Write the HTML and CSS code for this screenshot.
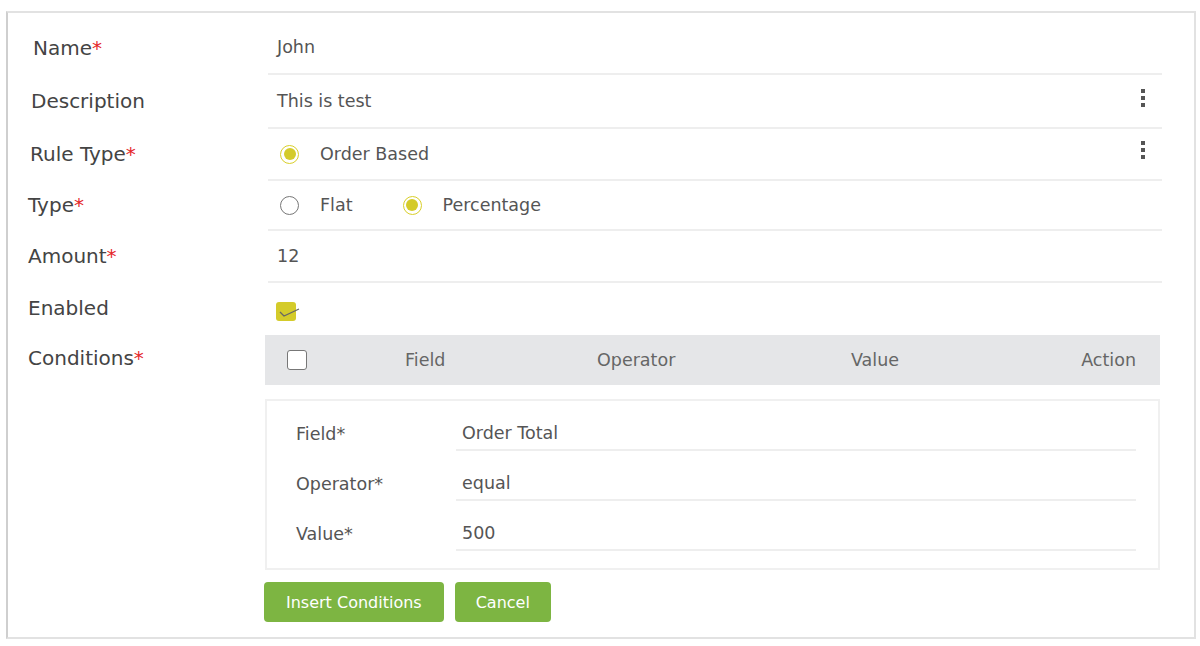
FILE: index.html
```html
<!DOCTYPE html>
<html lang="en">
<head>
    <meta charset="UTF-8">
    <title>Discount Rule</title>
    <link rel="stylesheet" href="styles.css">
</head>
<body>
    <div class="panel">
        <div class="row r1">
            <div class="label l-name">Name<span class="req">*</span></div>
            <div class="field">John</div>
        </div>
        <div class="row r2">
            <div class="label l-desc">Description</div>
            <div class="field">This is test<span class="kebab"><i></i><i></i><i></i></span></div>
        </div>
        <div class="row r3">
            <div class="label l-rule">Rule Type<span class="req">*</span></div>
            <div class="field">
                <span class="radio on"></span><span class="opt">Order Based</span>
                <span class="kebab"><i></i><i></i><i></i></span>
            </div>
        </div>
        <div class="row r4">
            <div class="label">Type<span class="req">*</span></div>
            <div class="field">
                <span class="radio"></span><span class="opt flat">Flat</span>
                <span class="radio on"></span><span class="opt">Percentage</span>
            </div>
        </div>
        <div class="row r5">
            <div class="label">Amount<span class="req">*</span></div>
            <div class="field">12</div>
        </div>
        <div class="row r6">
            <div class="label">Enabled</div>
            <div class="field plain">
                <span class="check">
                    <svg width="26" height="14" viewBox="0 0 26 14"><path d="M5 7 L9 11 L24 4" fill="none" stroke="#666" stroke-width="1.3"/></svg>
                </span>
            </div>
        </div>
        <div class="row conditions">
            <div class="label">Conditions<span class="req">*</span></div>
            <div class="cond">
                <div class="thead">
                    <div class="c-check"><span class="box"></span></div>
                    <div class="c-field">Field</div>
                    <div class="c-op">Operator</div>
                    <div class="c-val">Value</div>
                    <div class="c-act">Action</div>
                </div>
                <div class="editor">
                    <div class="erow"><span class="elabel">Field*</span><span class="einput">Order Total</span></div>
                    <div class="erow"><span class="elabel">Operator*</span><span class="einput">equal</span></div>
                    <div class="erow"><span class="elabel">Value*</span><span class="einput">500</span></div>
                </div>
                <div class="buttons">
                    <button class="btn">Insert Conditions</button>
                    <button class="btn cancel">Cancel</button>
                </div>
            </div>
        </div>
    </div>
</body>
</html>
```

FILE: styles.css
```css
body{
    margin:0;
    background:#fff;
    font-family:"DejaVu Sans", sans-serif;
    color:#555;
}
.panel{
    margin:11px 4px 0 6px;
    height:628px;
    box-sizing:border-box;
    border:2px solid #e2e2e2;
    border-left-color:#cfcfcf;
    padding-top:8px;
    padding-right:32px;
}
.row{
    display:grid;
    grid-template-columns:260px 1fr;
    align-items:center;
}
.label{
    padding-left:20px;
    padding-bottom:3px;
    font-size:20px;
    color:#444;
}
.l-name{ padding-left:25px; }
.l-desc{ padding-left:23px; }
.l-rule{ padding-left:22px; }
.req{
    color:#e5262b;
}
.field{
    display:flex;
    align-items:center;
    padding-left:9px;
    border-bottom:2px solid #eee;
    font-size:17.5px;
    position:relative;
}
.r1 .label{ padding-bottom:0; }
.r1 .field{ height:52px; }
.r2 .field{ height:52px; }
.r3 .field{ height:50px; }
.r4 .field{ height:48px; }
.r5 .field{ height:50px; }
.r6 .field{ height:52px; border-bottom:none; padding-left:8px; }
.kebab{
    position:absolute;
    right:17px;
    top:14px;
    display:flex;
    flex-direction:column;
    gap:3px;
}
.r3 .kebab{ top:12px; }
.kebab i{
    display:block;
    width:4px;
    height:4px;
    background:#555;
}
.radio{
    width:17px;
    height:17px;
    border:1.5px solid #777;
    border-radius:50%;
    margin-left:3px;
    margin-right:21px;
    position:relative;
    flex:none;
}
.radio.on{
    border-color:#d9cf2a;
}
.radio.on::after{
    content:"";
    position:absolute;
    left:2.5px;
    top:2.5px;
    width:12px;
    height:12px;
    border-radius:50%;
    background:#d4cb2a;
}
.opt.flat{
    margin-right:47px;
}
.check{
    width:20px;
    height:19px;
    border-radius:3px;
    background:#d4cb2a;
    position:relative;
    margin-top:4px;
}
.check svg{
    position:absolute;
    left:-1px;
    top:3px;
}
.conditions{
    grid-template-columns:257px 1fr;
    align-items:start;
}
.conditions .label{
    padding-left:20px;
    padding-top:11px;
}
.cond{
    padding-right:2px;
}
.thead{
    display:flex;
    align-items:center;
    height:50px;
    background:#e5e6e8;
    font-size:17.5px;
    color:#666;
}
.c-check{
    width:140px;
    padding-left:22px;
    box-sizing:border-box;
    display:flex;
}
.box{
    width:18px;
    height:18px;
    border:1.5px solid #777;
    border-radius:3px;
    background:#fff;
}
.c-field{ width:192px; }
.c-op{ width:254px; }
.c-val{ flex:1; }
.c-act{ padding-right:24px; }
.editor{
    margin-top:14px;
    border:2px solid #f0f0f0;
    padding:15px 22px 17px 29px;
}
.erow{
    display:flex;
    align-items:center;
    margin-bottom:15px;
}
.erow:last-child{
    margin-bottom:0;
}
.elabel{
    width:160px;
    font-size:17.5px;
    color:#555;
}
.einput{
    flex:1;
    height:33px;
    display:flex;
    align-items:center;
    padding-left:6px;
    border-bottom:2px solid #eee;
    font-size:17.5px;
}
.buttons{
    display:flex;
    gap:11px;
    margin-top:12px;
    margin-left:-1px;
}
.btn{
    height:40px;
    padding:0 22px;
    border:none;
    border-radius:4px;
    background:#7db542;
    color:#fff;
    font-family:"DejaVu Sans", sans-serif;
    font-size:16px;
}
.btn.cancel{
    padding:0 21px;
}
```
